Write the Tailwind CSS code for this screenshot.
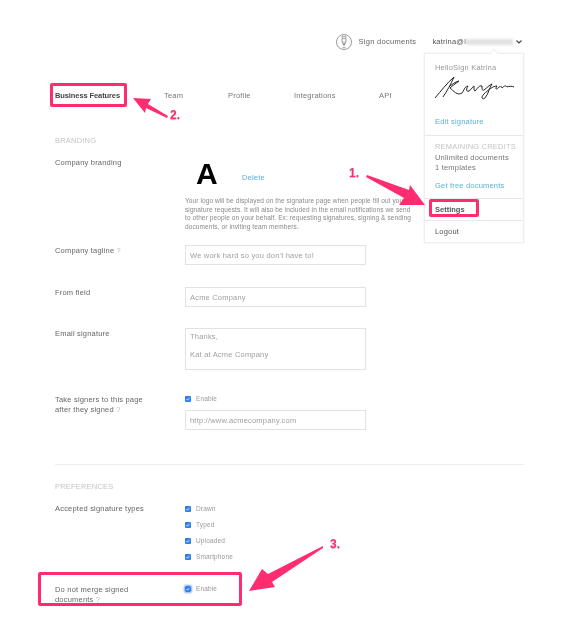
<!DOCTYPE html>
<html lang="en">
  <head>
    <meta charset="UTF-8" />
    <title>Settings</title>
    <script src="https://cdn.jsdelivr.net/npm/@tailwindcss/browser@4"></script>
  </head>
  <body class="bg-white font-['Liberation_Sans',sans-serif] text-[7.5px] tracking-[0.2px] text-[#666]">
    <div class="relative w-[574px] h-[637px] overflow-hidden blur-[0.35px]">
      <!-- Top bar -->
      <header class="flex justify-end items-center h-[18px] mt-[33px] pr-[52px]">
        <svg class="w-[16px] h-[16px] mr-[6px]" viewBox="0 0 17 17" fill="none" stroke="#666" stroke-width="0.7">
          <circle cx="8.5" cy="8.5" r="8" />
          <path d="M6.500 2.500h4v2.500h-4zM6.200 5.500c0 3 1 4.500 2.300 6.500c1.300-2 2.300-3.500 2.300-6.500M8.500 8v4M7 14.500h3" />
        </svg>
        <span class="tracking-[0.3px] text-[#666]">Sign documents</span>
        <span class="ml-[16px] text-[#555]">katrina@l</span>
        <span class="w-[47px] h-[6px] bg-[#e2e2e2] blur-[1px]"></span>
        <svg class="w-[6px] h-[4px] ml-[3px]" viewBox="0 0 6 4" fill="none" stroke="#444" stroke-width="1.100"><path d="M0.500 0.500l2.500 2.500l2.500-2.500" /></svg>
      </header>

      <!-- Tabs -->
      <nav class="flex items-center h-[12px] mt-[39px] ml-[55px]">
        <span class="w-[109px] font-bold tracking-[-0.1px] text-[#444]">Business Features</span>
        <span class="w-[64px] text-[#777]">Team</span>
        <span class="w-[66px] text-[#777]">Profile</span>
        <span class="w-[85px] text-[#777]">Integrations</span>
        <span class="text-[#777]">API</span>
      </nav>

      <main class="ml-[55px] w-[469px]">
        <h2 class="mt-[34px] h-[10px] leading-[10px] text-[#c4c4c4]">BRANDING</h2>

        <!-- Company branding -->
        <section class="grid grid-cols-[130px_181px] mt-[12px]">
          <label class="leading-[10px]">Company branding</label>
          <div class="pt-[4px]">
            <div class="flex items-end h-[24px]">
              <span class="ml-[11px] w-[46px] font-bold text-[30px] leading-[24px] tracking-normal text-black">A</span>
              <a class="text-[#5aaedb] mb-[2.500px]">Delete</a>
            </div>
            <p class="mt-[11px] whitespace-nowrap text-[6.5px] leading-[8.500px] tracking-[0.1px] text-[#888]">Your logo will be displayed on the signature page when people fill out your<br />signature requests. It will also be included in the email notifications we send<br />to other people on your behalf. Ex: requesting signatures, signing &amp; sending<br />documents, or inviting team members.</p>
          </div>
        </section>

        <!-- Tagline -->
        <section class="grid grid-cols-[130px_181px] mt-[14px]">
          <label class="pt-[1px] leading-[10px]">Company tagline <span class="text-[#bbb]">?</span></label>
          <input class="h-[20px] px-[4px] border border-[#e2e2e2] placeholder:text-[#a0a0a0]" placeholder="We work hard so you don't have to!" />
        </section>

        <!-- From field -->
        <section class="grid grid-cols-[130px_181px] mt-[22px]">
          <label class="pt-[1px] leading-[10px]">From field</label>
          <input class="h-[20px] px-[4px] border border-[#e2e2e2] placeholder:text-[#a0a0a0]" placeholder="Acme Company" />
        </section>

        <!-- Email signature -->
        <section class="grid grid-cols-[130px_181px] mt-[21px]">
          <label class="pt-[1px] leading-[10px]">Email signature</label>
          <div class="h-[42px] px-[4px] pt-[3px] border border-[#e2e2e2] leading-[9px] text-[#a0a0a0]">Thanks,<br /><br />Kat at Acme Company</div>
        </section>

        <!-- Take signers -->
        <section class="grid grid-cols-[130px_181px] mt-[25px]">
          <label class="leading-[9.500px]">Take signers to this page<br />after they signed <span class="text-[#bbb]">?</span></label>
          <div>
            <div class="flex items-center gap-[5px] h-[8px] text-[6.5px] tracking-[0.15px] text-[#999]">
              <svg class="w-[6px] h-[6px]" viewBox="0 0 6 6"><rect width="6" height="6" rx="1" fill="#2f80ed" /><path d="M1.500 3l1 1.200l2-2.400" fill="none" stroke="#fff" stroke-width="0.800" /></svg>
              Enable
            </div>
            <input class="block w-full h-[20px] mt-[7px] px-[4px] border border-[#e2e2e2] placeholder:text-[#a0a0a0]" placeholder="http://www.acmecompany.com" />
          </div>
        </section>

        <hr class="mt-[34px] border-[#eee]" />

        <h2 class="mt-[17px] h-[10px] leading-[10px] text-[#c4c4c4]">PREFERENCES</h2>

        <!-- Signature types -->
        <section class="grid grid-cols-[130px_181px] mt-[12px]">
          <label class="leading-[10px]">Accepted signature types</label>
          <div class="flex flex-col gap-[8px] pt-[1px] text-[6.5px] tracking-[0.15px] text-[#999]">
            <div class="flex items-center gap-[5px] h-[8px]"><svg class="w-[6px] h-[6px]" viewBox="0 0 6 6"><rect width="6" height="6" rx="1" fill="#2f80ed" /><path d="M1.500 3l1 1.200l2-2.400" fill="none" stroke="#fff" stroke-width="0.800" /></svg>Drawn</div>
            <div class="flex items-center gap-[5px] h-[8px]"><svg class="w-[6px] h-[6px]" viewBox="0 0 6 6"><rect width="6" height="6" rx="1" fill="#2f80ed" /><path d="M1.500 3l1 1.200l2-2.400" fill="none" stroke="#fff" stroke-width="0.800" /></svg>Typed</div>
            <div class="flex items-center gap-[5px] h-[8px]"><svg class="w-[6px] h-[6px]" viewBox="0 0 6 6"><rect width="6" height="6" rx="1" fill="#2f80ed" /><path d="M1.500 3l1 1.200l2-2.400" fill="none" stroke="#fff" stroke-width="0.800" /></svg>Uploaded</div>
            <div class="flex items-center gap-[5px] h-[8px]"><svg class="w-[6px] h-[6px]" viewBox="0 0 6 6"><rect width="6" height="6" rx="1" fill="#2f80ed" /><path d="M1.500 3l1 1.200l2-2.400" fill="none" stroke="#fff" stroke-width="0.800" /></svg>Smartphone</div>
          </div>
        </section>

        <!-- Do not merge -->
        <section class="grid grid-cols-[130px_181px] mt-[24px]">
          <label class="leading-[9.500px]">Do not merge signed<br />documents <span class="text-[#bbb]">?</span></label>
          <div class="flex items-center gap-[5px] h-[8px] text-[6.5px] tracking-[0.15px] text-[#999]">
            <svg class="w-[6px] h-[6px] rounded-[1px] shadow-[0_0_2px_1px_#7fb0f0]" viewBox="0 0 6 6"><rect width="6" height="6" rx="1" fill="#2f80ed" /><path d="M1.500 3l1 1.200l2-2.400" fill="none" stroke="#fff" stroke-width="0.800" /></svg>
            Enable
          </div>
        </section>
      </main>

      <!-- Account dropdown -->
      <aside class="absolute left-[424px] top-[53px] w-[100px] h-[190px] bg-white border border-[#eee] flex flex-col shadow-[0_0_1px_#ddd]">
        <div class="h-[82px] px-[10px] pt-[9px] border-b border-[#e8e8e8]">
          <p class="leading-[9px] text-[#999]">HelloSign Katrina</p>
          <svg class="mt-[4px] w-[80px] h-[24px]" viewBox="0 0 80 24" fill="none" stroke="#222" stroke-width="1">
            <path d="M0 22C6 15 12 7 19 1C16 8 12 15 8 21M14 11C16 9 20 6 24 5C20 8 17 10 15 12C19 15 22 20 27 17C29 15 29 11 33 10C31 13 31 16 34 15C37 13 38 10 39 10C39 13 39 15 40 15C43 12 44 9 47 10C47 13 47 15 49 14C52 12 54 9 57 8C54 12 54 17 50 22C48 24 45 22 49 18C53 14 58 10 62 10C60 13 61 14 63 12C65 10 67 10 67 12C69 10 71 9 72 11C74 10 77 10 79 11" />
          </svg>
          <a class="block mt-[17px] leading-[9px] text-[#5aaedb]">Edit signature</a>
        </div>
        <div class="h-[63px] px-[10px] pt-[6px] border-b border-[#e8e8e8]">
          <p class="whitespace-nowrap leading-[9px] text-[#c4c4c4]">REMAINING CREDITS</p>
          <p class="mt-[2px] whitespace-nowrap leading-[10px] text-[#777]">Unlimited documents</p>
          <p class="leading-[10px] text-[#777]">1 templates</p>
          <a class="block mt-[8px] whitespace-nowrap leading-[9px] text-[#5aaedb]">Get free documents</a>
        </div>
        <div class="h-[22px] px-[10px] flex items-center font-bold tracking-normal text-[#555] border-b border-[#e8e8e8]">Settings</div>
        <div class="flex-1 px-[10px] flex items-center text-[#555]">Logout</div>
      </aside>
      <!-- Caret above the dropdown -->
      <span class="absolute left-[491px] top-[50px] w-[6px] h-[6px] rotate-45 bg-white border-l border-t border-[#eee]"></span>

      <!-- Annotation boxes -->
      <div class="absolute left-[50px] top-[83px] w-[77px] h-[24px] border-[3px] border-[#ff2d6f] rounded-[2px]"></div>
      <div class="absolute left-[429px] top-[199px] w-[50px] h-[18px] border-[3px] border-[#ff2d6f] rounded-[2px]"></div>
      <div class="absolute left-[38px] top-[572px] w-[204px] h-[34px] border-[3px] border-[#ff2d6f] rounded-[2px]"></div>

      <!-- Annotation arrows -->
      <svg class="absolute left-0 top-0 w-[574px] h-[637px]" viewBox="0 0 574 637" fill="#ff2d6f">
        <polygon points="367,175 409,190 410,185 425,205 399,205 404,198 366,177" />
        <polygon points="133,98 151,99 148,104 168,116 167,118 146,108 145,113" />
        <polygon points="323,546 268,574 262,569 249,591 275,587 272,582 323,548" />
      </svg>

      <!-- Annotation numbers -->
      <span class="absolute left-[349px] top-[166px] font-bold text-[12px] leading-[14px] tracking-normal text-[#ff2d6f] [text-shadow:0_1px_1px_#bbb]">1.</span>
      <span class="absolute left-[170px] top-[108px] font-bold text-[12px] leading-[14px] tracking-normal text-[#ff2d6f] [text-shadow:0_1px_1px_#bbb]">2.</span>
      <span class="absolute left-[330px] top-[537px] font-bold text-[12px] leading-[14px] tracking-normal text-[#ff2d6f] [text-shadow:0_1px_1px_#bbb]">3.</span>
    </div>
  </body>
</html>
